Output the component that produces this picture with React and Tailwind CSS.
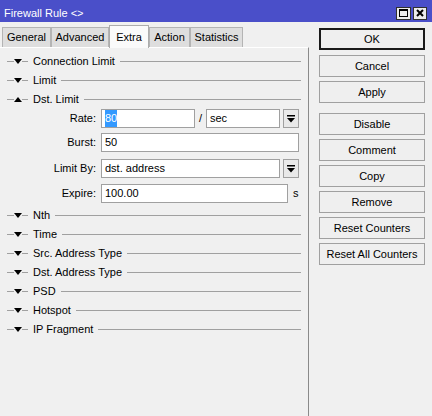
import React from 'react';

const LINE = 'bg-[#a0a0a0]';

function Tri({ up }) {
  return (
    <svg width="8" height="5" viewBox="0 0 8 5" className="shrink-0">
      <path d={up ? 'M0 5 L4 0 L8 5Z' : 'M0 0 L8 0 L4 5Z'} fill="#000" />
    </svg>
  );
}

function Section({ label, open }) {
  return (
    <div className="flex items-center h-[19px] pl-[7px] pr-[7px]">
      <span className={`w-[7px] h-px ${LINE}`} />
      <Tri up={open} />
      <span className={`w-[6px] h-px ${LINE}`} />
      <span className="ml-[5px] mr-[5px] whitespace-nowrap">{label}</span>
      <span className={`flex-1 h-px ${LINE}`} />
    </div>
  );
}

function DropBtn() {
  return (
    <div className="ml-[3px] w-[16px] h-[19px] border border-[#a0a0a0] bg-[#e9e9e9] flex items-center justify-center">
      <svg width="8" height="8" viewBox="0 0 8 8">
        <rect x="0" y="0" width="8" height="1.5" fill="#000" />
        <path d="M0 3 L8 3 L4 7.5Z" fill="#000" />
      </svg>
    </div>
  );
}

function Field({ label, children, className = '' }) {
  return (
    <div className={`flex items-center ${className}`}>
      <span className="w-[96px] text-right">{label}</span>
      <div className="ml-[5px] flex items-center">{children}</div>
    </div>
  );
}

const box = 'h-[19px] border border-[#a0a0a0] bg-white px-[3px] flex items-center';

function Btn({ children, primary, className = '' }) {
  return (
    <div
      className={`w-[106px] h-[22px] flex items-center justify-center bg-[#efefef] ${
        primary ? 'border-2 border-[#1a1a1a]' : 'border border-[#a0a0a0]'
      } ${className}`}
    >
      {children}
    </div>
  );
}

export default function App() {
  const tabs = [
    { name: 'General', w: 'w-[49px]' },
    { name: 'Advanced', w: 'w-[58px]' },
    { name: 'Extra', w: 'w-[40px]', active: true },
    { name: 'Action', w: 'w-[41px]' },
    { name: 'Statistics', w: 'w-[53px]' },
  ];

  return (
    <div className="w-[432px] h-[416px] bg-[#f0f0f0] flex flex-col overflow-hidden text-[11px] text-black font-['Liberation_Sans',Arial,sans-serif]">
      {/* title bar */}
      <div className="h-[22px] bg-[#4a4fc9] flex items-center pl-[4px] pr-[5px] pt-[4px] shrink-0">
        <span className="text-white flex-1">Firewall Rule &lt;&gt;</span>
        <div className="flex gap-[2px]">
          <div className="w-[15px] h-[13px] bg-[#ececec] border border-[#303030] flex items-center justify-center">
            <div className="w-[9px] h-[8px] border border-black border-t-2" />
          </div>
          <div className="w-[14px] h-[13px] bg-[#ececec] border border-[#303030] flex items-center justify-center">
            <svg width="8" height="8" viewBox="0 0 8 8">
              <path d="M1 1 L7 7 M7 1 L1 7" stroke="#000" strokeWidth="2" />
            </svg>
          </div>
        </div>
      </div>

      <div className="flex flex-1 min-h-0">
        {/* left side: tabs + panel */}
        <div className="w-[309px] flex flex-col">
          <div className="h-[25px] flex items-end pl-[2px] shrink-0">
            {tabs.map((t) =>
              t.active ? (
                <div
                  key={t.name}
                  className={`${t.w} h-[23px] -mb-px relative z-10 bg-[#fafafa] border border-b-0 border-[#acacac] flex items-center justify-center`}
                >
                  {t.name}
                </div>
              ) : (
                <div
                  key={t.name}
                  className={`${t.w} h-[20px] bg-[#dedede] border border-b-0 border-[#b4b4b4] flex items-center justify-center`}
                >
                  {t.name}
                </div>
              )
            )}
          </div>
          <div className="flex-1 border-t border-white border-r border-r-[#8a8a8a] pt-[4px]">
            <Section label="Connection Limit" />
            <Section label="Limit" />
            <Section label="Dst. Limit" open />

            <Field label="Rate:">
              <div className={`${box} w-[94px]`}>
                <span className="bg-[#3399ff] text-white">80</span>
              </div>
              <span className="w-[11px] text-center">/</span>
              <div className={`${box} w-[74px]`}>sec</div>
              <DropBtn />
            </Field>
            <Field label="Burst:" className="mt-[5px]">
              <div className={`${box} w-[198px]`}>50</div>
            </Field>
            <Field label="Limit By:" className="mt-[7px]">
              <div className={`${box} w-[179px]`}>dst. address</div>
              <DropBtn />
            </Field>
            <Field label="Expire:" className="mt-[6px]">
              <div className={`${box} w-[187px]`}>100.00</div>
              <span className="ml-[5px]">s</span>
            </Field>

            <div className="mt-[3px]">
              <Section label="Nth" />
              <Section label="Time" />
              <Section label="Src. Address Type" />
              <Section label="Dst. Address Type" />
              <Section label="PSD" />
              <Section label="Hotspot" />
              <Section label="IP Fragment" />
            </div>
          </div>
        </div>

        {/* right side: buttons */}
        <div className="flex flex-col pl-[10px] pt-[6px] gap-[4px]">
          <Btn primary className="mb-[1px]">OK</Btn>
          <Btn>Cancel</Btn>
          <Btn className="mb-[6px]">Apply</Btn>
          <Btn>Disable</Btn>
          <Btn>Comment</Btn>
          <Btn>Copy</Btn>
          <Btn>Remove</Btn>
          <Btn>Reset Counters</Btn>
          <Btn>Reset All Counters</Btn>
        </div>
      </div>
    </div>
  );
}
